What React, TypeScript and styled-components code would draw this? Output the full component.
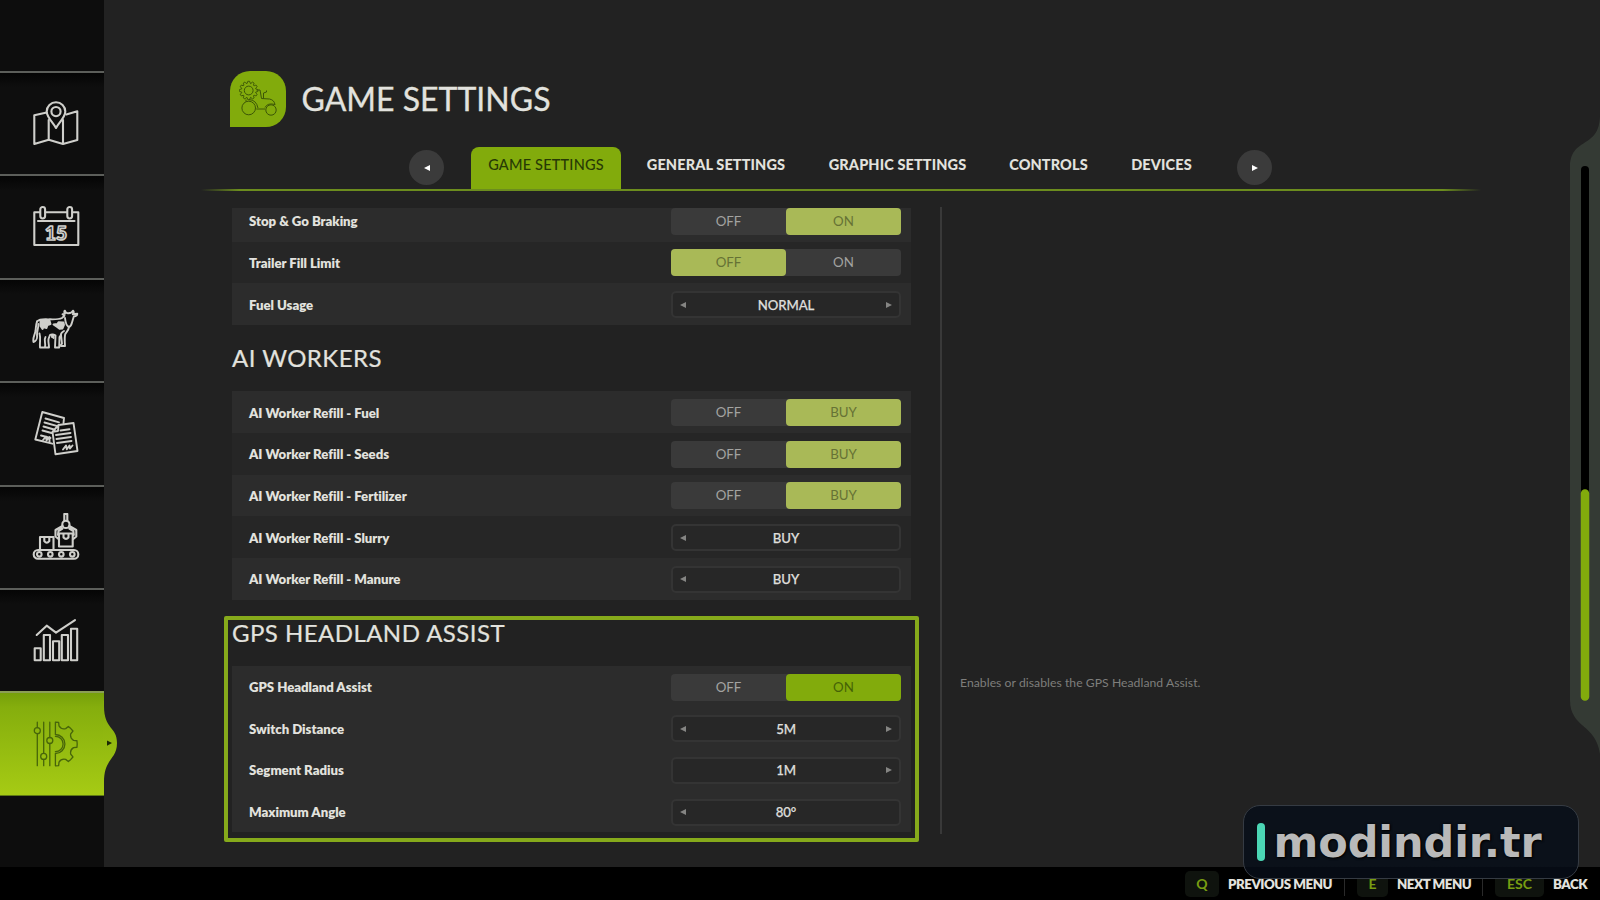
import React from "react";
import styled, { createGlobalStyle, css } from "styled-components";

const GREEN = "#82ab0c";
const BG = "#222222";
const TEXT = "#e2e2de";

const Global = createGlobalStyle`
  * { box-sizing: border-box; }
  body {
    margin: 0;
    background: ${BG};
    font-family: Lato, "Open Sans", sans-serif;
    font-variant-ligatures: none;
    overflow: hidden;
  }
`;

const Screen = styled.div`
  position: relative;
  width: 1600px;
  height: 900px;
  background: ${BG};
  color: ${TEXT};
  display: grid;
  grid-template: 867px 33px / 104px 1fr;
  overflow: hidden;
  white-space: nowrap;
`;

/* ---------- side bar ---------- */
const SideBar = styled.nav`
  background: #0d0d0d;
  padding-top: 71px;
  display: flex;
  flex-direction: column;
`;

const SideItem = styled.div<{ $active?: boolean }>`
  position: relative;
  height: 103.4px;
  flex: none;
  padding-left: 32px;
  display: flex;
  align-items: center;
  border-top: 2px solid #5c5e5a;
  background: linear-gradient(#050505, #0e0e0e 14%);
  color: #cfcfcb;
  ${(p) =>
    p.$active &&
    css`
      height: 105px;
      border-top-color: #8b9f55;
      background: linear-gradient(#76a00a, #85ae0d 14%, #a6cb14);
      color: #47650a;
      border-bottom: 1px solid #5f7a14;
    `}
`;

const Bulge = styled.svg`
  position: absolute;
  left: 103px;
  top: 5px;
  width: 15px;
  height: 90px;
`;

const Icon = styled.svg<{ $line?: number }>`
  width: 48px;
  height: 48px;
  fill: none;
  stroke: currentColor;
  stroke-width: ${(p) => p.$line ?? 2.1};
  stroke-linejoin: round;
  stroke-linecap: round;
`;

/* ---------- header ---------- */
const Main = styled.main`
  padding-top: 71px;
  display: flex;
  flex-direction: column;
`;

const Header = styled.header`
  display: flex;
  align-items: center;
  height: 56px;
  padding-left: 126px;
  gap: 15.5px;
`;

const Badge = styled.div`
  width: 56px;
  height: 56px;
  border-radius: 20px 20px 20px 0;
  background: ${GREEN};
  color: #3c5607;
`;

const Title = styled.h1`
  margin: 0;
  font-size: 32px;
  font-weight: 400;
  line-height: 56px;
  letter-spacing: 0;
  -webkit-text-stroke: 0.3px;
`;

const TabBar = styled.div`
  margin-top: 20px;
  height: 42px;
  padding-left: 305px;
  display: flex;
`;

const RoundButton = styled.div`
  margin-top: 3px;
  width: 35px;
  height: 35px;
  flex: none;
  border-radius: 50%;
  background: #3b3b3b;
  display: grid;
  place-items: center;
`;

const Tab = styled.div<{ $w: number; $active?: boolean }>`
  width: ${(p) => p.$w}px;
  flex: none;
  text-align: center;
  font-size: 14.5px;
  line-height: 36px;
  font-weight: 900;
  letter-spacing: 0.12px;
  ${(p) =>
    p.$active &&
    css`
      margin: 0 4px 0 27px;
      border-radius: 8px 8px 0 0;
      background: ${GREEN};
      color: #273a05;
      font-weight: 500;
      letter-spacing: 0.2px;
    `}
`;

const Rule = styled.div`
  margin: 0 119px 0 97px;
  height: 2px;
  background: linear-gradient(90deg, transparent, #6c8d1e 3%, #6c8d1e 97%, transparent);
`;

/* ---------- settings list ---------- */
const Content = styled.div`
  display: flex;
  padding: 17px 0 0 128px;
`;

const Viewport = styled.div`
  width: 679px;
  height: 626px;
  clip-path: inset(0 -12px -12px -12px);
`;

const Scrolled = styled.div`
  margin-top: -8px;
`;

const Group = styled.section`
  position: relative;
`;

const Heading = styled.h2`
  margin: 0;
  height: 66.3px;
  line-height: 66px;
  font-size: 24px;
  font-weight: 400;
  letter-spacing: 0.45px;
  -webkit-text-stroke: 0.2px;
`;

const Row = styled.div<{ $lit: boolean }>`
  height: 41.67px;
  padding: 1px 10px 0 17px;
  display: flex;
  align-items: center;
  justify-content: space-between;
  background: ${(p) => (p.$lit ? "#2c2c2c" : "#262626")};
`;

const Label = styled.span`
  font-size: 13.2px;
  font-weight: 800;
  letter-spacing: -0.03px;
`;

const Switch = styled.div`
  display: flex;
  width: 230px;
  height: 27px;
  border-radius: 4px;
  background: #3a3a3a;
`;

const Choice = styled.span<{ $tone?: "soft" | "strong" }>`
  flex: 1;
  border-radius: 4px;
  text-align: center;
  font-size: 13.3px;
  line-height: 27px;
  color: ${(p) => (p.$tone ? (p.$tone === "soft" ? "#667235" : "#456206") : "#a3a3a1")};
  background: ${(p) => (p.$tone === "soft" ? "#a9b957" : p.$tone === "strong" ? GREEN : "transparent")};
`;

const Picker = styled.div`
  width: 230px;
  height: 27px;
  padding: 0 5px;
  border: 2px solid #343434;
  border-radius: 5px;
  background: #272727;
  display: grid;
  grid-template-columns: 10px 1fr 10px;
  align-items: center;
  text-align: center;
  font-size: 13.2px;
  font-weight: 500;
  letter-spacing: -0.1px;
  color: #dededb;
  -webkit-text-stroke: 0.25px;
`;

const Highlight = styled.div`
  position: absolute;
  left: -8px;
  right: -8px;
  top: 16px;
  bottom: -10px;
  border: 4.5px solid #86aa1b;
  border-radius: 2px;
`;

const Detail = styled.aside`
  margin: -1px 0 0 29px;
  height: 627px;
  border-left: 2px solid #393939;
  padding: 467px 0 0 18px;
  font-size: 12.2px;
  line-height: 18px;
  letter-spacing: 0.04px;
  color: #7e7e7c;
`;

/* ---------- scroll bar ---------- */
const ScrollPanel = styled.svg`
  position: absolute;
  right: 0;
  top: 110px;
  width: 30px;
  height: 650px;
`;

/* ---------- footer ---------- */
const Footer = styled.footer`
  grid-column: 1 / 3;
  background: #000;
  display: flex;
  justify-content: flex-end;
  align-items: center;
  padding: 1px 12px 0 0;
`;

const Key = styled.kbd<{ $w: number }>`
  width: ${(p) => p.$w}px;
  height: 26px;
  border-radius: 5px;
  background: #0f130e;
  color: #789d12;
  font: 700 14px/26px Lato, sans-serif;
  text-align: center;
`;

const Hint = styled.span<{ $w: number }>`
  width: ${(p) => p.$w}px;
  margin-left: 9px;
  font-size: 13.3px;
  font-weight: 800;
  letter-spacing: -0.48px;
`;

const Separator = styled.i`
  width: 1px;
  height: 24px;
  margin: 0 12px;
  background: #2a2a2a;
`;

const Watermark = styled.div`
  position: absolute;
  left: 1242.5px;
  top: 805px;
  width: 336px;
  height: 73.5px;
  border-radius: 17px;
  border: 1px solid #353b43;
  background: linear-gradient(#0b111a 84%, #060b14 85%);
  display: flex;
  align-items: center;
  padding-left: 13px;
  gap: 9px;
  color: #b9b9b9;
  font: 700 43px/60px "DejaVu Sans", sans-serif;
  letter-spacing: -0.1px;
  text-shadow: 0 0 3px #000, 1px 1px 2px #000;

  &::before {
    content: "";
    width: 8px;
    height: 38px;
    border-radius: 4px;
    background: #4bd6b5;
  }
`;

const Arrow = ({ dir, size = 6, color = "#858583" }: { dir: "l" | "r"; size?: number; color?: string }) => (
  <svg width={size} height={size} viewBox="0 0 6 6" style={{ display: "block", justifySelf: "center" }}>
    <path d={dir === "l" ? "M6 0V6L0 3Z" : "M0 0V6L6 3Z"} fill={color} />
  </svg>
);

/* Outline of a cog between two angles, with a rounded-off trapezoid for each tooth. */
function cog(cx: number, cy: number, outer: number, inner: number, teeth: number, from = -90, to = 270) {
  const step = 360 / teeth;
  const pt = (r: number, a: number) =>
    `${(cx + r * Math.cos((a * Math.PI) / 180)).toFixed(2)} ${(cy + r * Math.sin((a * Math.PI) / 180)).toFixed(2)}`;
  let d = `M${pt(outer, from)}`;
  for (let a = from; a < to - 0.1; a += step) {
    d += `L${pt(outer, a + step * 0.19)}L${pt(inner + 1, a + step * 0.25)}`;
    d += `Q${pt(inner - 2, a + step * 0.5)} ${pt(inner + 1, a + step * 0.75)}`;
    d += `L${pt(outer, a + step * 0.81)}L${pt(outer, a + step)}`;
  }
  return d;
}

const MapIcon = () => (
  <Icon viewBox="0 0 48 48">
    <path d="M14.7 12.5 2.3 15.3V44l14.4-4.3L31 44l14.3-4V11.3l-11 3.2M16.7 20v19.7M31 20v24" />
    <path d="M24 28c-2-4.500-9.300-10.500-9.300-16.500a9.300 9.300 0 0 1 18.600 0C33.300 17.500 26 23.500 24 28Z" />
    <circle cx="24" cy="11.600" r="4.600" />
  </Icon>
);

const CalendarIcon = () => (
  <Icon viewBox="0 0 48 48">
    <path d="M8 9.300H2.300V42h44V9.300H41M13.500 9.300H35M6 18h36.500" />
    <rect x="8.300" y="4" width="4.800" height="11.500" rx="2.400" />
    <rect x="35.300" y="4" width="4.800" height="11.500" rx="2.400" />
    <text x="24" y="36.500" textAnchor="middle" fontFamily="Lato, sans-serif" fontWeight="900" fontSize="19" style={{ strokeWidth: 1.7 }}>
      15
    </text>
  </Icon>
);

const CowIcon = () => (
  <Icon viewBox="0 0 48 48" $line={1.9}>
    <path d="M5 15.500C8 12.500 12 13.500 18 13.300c6 .2 9 .2 12-1.300l2.500-2.300-2-1.500 2.500-.5c-1-1-1-2.500 0-3 .5 1.500 1.500 2.500 3 2.500s4 .2 5-2.500c1 1 .7 2.500-.2 3.500l4.500-.4c0 1.600-2 2.600-3.500 2.700l-1.800 6c-.5 2-1.500 4-3 4.500-.5 3.500-2 4.500-3.500 6.500-1 2-1 5-.5 12.500h-4V39l1-1.500-1-8.500-1.500 2-.3 10.500h-4.200l.5-12c-1-1-4-1.500-5.500-.5l-1.500 4c-.5 3 .5 5 .5 8.500H8c-.5-6 1-9-.5-14" />
    <path d="M5 15.500C4 18 4 21 3.500 25c-1 5-3 7-2 11 2-.5 4-3 3.500-6.500C5 25 6.500 21 6.500 18" />
    <path d="M33 12c.5 5 1.500 8 4 9M13.500 31c-2 3 .5 6-.5 10M20 31v-2l1.500 1v2M32 25c-2 1-3 2-3.200 4" />
    <path fill="currentColor" d="M8.500 14.500h9l1 3.500-3 1-1 3-3-1-1 2-2-3ZM21.500 18.500l4-.5 1-1.800 5 .3.500 2.500-1.500 3.500-3 .2-2-1.500Z" />
  </Icon>
);

const PapersIcon = () => (
  <Icon viewBox="0 0 48 48" $line={1.9}>
    <path d="M31.500 13 32 8 10.300 2 3.300 29.500l17 4.200" />
    <path d="m13.500 8.500 13.500 3.800M12.500 12.500l13 3.700M11.500 16.500l10.500 3M10.500 20.500l9 2.500M9 25.500l9.500 2.500M11 30l3-3.500.500 4 3-3.500v5" />
    <path d="m26.500 15 15-2 4 28-22 3.300-3-22.500ZM26.500 15l-.5 6-5.500.8" />
    <path d="m28.500 20.500 9-1.300M24 25l14.500-2M24.500 29l14.500-2M25 33l14.500-2M31 39.500l3-4 .8 3.700 2.700-3.700.5 3 2.500-3" />
  </Icon>
);

const ConveyorIcon = () => (
  <Icon viewBox="0 0 48 48">
    <rect x="1.700" y="37" width="44.600" height="8.700" rx="4.300" />
    {[7.3, 18.3, 29.3, 40.3].map((x) => (
      <circle key={x} cx={x} cy="41.300" r="2.300" />
    ))}
    <path d="M8 24h13.500v13H8ZM12.300 24v4.200q2.500 3 5 0V24M27 20.500h13.700v13H27ZM31.500 20.500v4q2.500 2.800 5 0v-4" />
    <path d="M32.300 8V1h3v7" />
    <circle cx="33.900" cy="11.400" r="3.600" />
    <path d="m30.500 13-7 4v6.500l3 2.500M30.500 15.500l-4 2.500-.5 4M37.300 13l7 4v6.500l-3 2.500M37.300 15.500l4 2.500.5 4" />
  </Icon>
);

const ChartIcon = () => (
  <Icon viewBox="0 0 48 48">
    <path d="M2.700 31.300h6v12h-6ZM11.800 18h6.200v25.300h-6.200ZM21 24.300h6.200v19H21ZM29.800 18H36v25.300h-6.200ZM39 11.700h6.200v31.600H39ZM4.700 18l10-9.300 9.300 7 19-12.500" />
  </Icon>
);

const SettingsIcon = () => (
  <Icon viewBox="0 0 48 48" $line={1.3}>
    <path d="M5.300 2.200v5.500M5.300 13.700v32M11.700 2.200v31.200M11.700 39.400v6.300M17.800 2.200v15.300M17.800 23.500v22.200" />
    <circle cx="5.300" cy="10.700" r="3" />
    <circle cx="11.700" cy="36.400" r="3" />
    <circle cx="17.800" cy="20.500" r="3" />
    <path d={cog(23.4, 24, 21.8, 17.5, 8, -90, 90) + "V33.500A9.500 9.500 0 0 0 23.400 14.500V2.200"} />
    <path d="M23.400 16.300a7.700 7.700 0 0 1 0 15.400" />
  </Icon>
);

const TractorIcon = () => (
  <svg width="56" height="56" viewBox="0 0 56 56" fill="none" stroke="currentColor" strokeWidth="1" strokeLinejoin="round">
    <path d={cog(18.7, 19.5, 9.2, 7.6, 12)} />
    <circle cx="18.700" cy="19.500" r="4.400" />
    <circle cx="18.700" cy="37" r="6.800" />
    <circle cx="41" cy="39" r="5.200" />
    <path d="M16 28.500v2M26.500 19h3.500l1.500 8.500 8 .5q5 1 5.500 6M33.500 27.500V22l3-1v-1.500M26.300 38H35M18.700 28.600q7.500 0 9.300 8.400M35 36.500q2.500-5 10-3" />
  </svg>
);

type Setting =
  | { label: string; options: [string, string]; on: 0 | 1; strong?: boolean }
  | { label: string; value: string; arrows: string };

const settings: { title?: string; highlighted?: boolean; rows: Setting[] }[] = [
  {
    rows: [
      { label: "Stop & Go Braking", options: ["OFF", "ON"], on: 1 },
      { label: "Trailer Fill Limit", options: ["OFF", "ON"], on: 0 },
      { label: "Fuel Usage", value: "NORMAL", arrows: "lr" },
    ],
  },
  {
    title: "AI WORKERS",
    rows: [
      { label: "AI Worker Refill - Fuel", options: ["OFF", "BUY"], on: 1 },
      { label: "AI Worker Refill - Seeds", options: ["OFF", "BUY"], on: 1 },
      { label: "AI Worker Refill - Fertilizer", options: ["OFF", "BUY"], on: 1 },
      { label: "AI Worker Refill - Slurry", value: "BUY", arrows: "l" },
      { label: "AI Worker Refill - Manure", value: "BUY", arrows: "l" },
    ],
  },
  {
    title: "GPS HEADLAND ASSIST",
    highlighted: true,
    rows: [
      { label: "GPS Headland Assist", options: ["OFF", "ON"], on: 1, strong: true },
      { label: "Switch Distance", value: "5M", arrows: "lr" },
      { label: "Segment Radius", value: "1M", arrows: "r" },
      { label: "Maximum Angle", value: "80°", arrows: "l" },
    ],
  },
];

const SettingRow = ({ s, lit }: { s: Setting; lit: boolean }) => (
  <Row $lit={lit}>
    <Label>{s.label}</Label>
    {"options" in s ? (
      <Switch>
        {s.options.map((o, i) => (
          <Choice key={o} $tone={i === s.on ? (s.strong ? "strong" : "soft") : undefined}>
            {o}
          </Choice>
        ))}
      </Switch>
    ) : (
      <Picker>
        {s.arrows.includes("l") ? <Arrow dir="l" /> : <span />}
        <span>{s.value}</span>
        {s.arrows.includes("r") ? <Arrow dir="r" /> : <span />}
      </Picker>
    )}
  </Row>
);

const NextButton = styled(RoundButton)`
  margin-left: 23px;
`;

export default function App() {
  return (
    <Screen>
      <Global />
      <SideBar>
        {[MapIcon, CalendarIcon, CowIcon, PapersIcon, ConveyorIcon, ChartIcon].map((Glyph, i) => (
          <SideItem key={i}>
            <Glyph />
          </SideItem>
        ))}
        <SideItem $active>
          <SettingsIcon />
          <Bulge viewBox="0 0 15 90">
            <defs>
              <linearGradient id="bulge" x1="0" y1="0" x2="0" y2="1">
                <stop offset="0" stopColor="#84ad0d" />
                <stop offset="1" stopColor="#a2c713" />
              </linearGradient>
            </defs>
            <path d="M0 3H1V8C1 32 14 28 14 45S1 60 1 84V87H0Z" fill="url(#bulge)" />
            <path d="M4 42.500v5.200l5-2.600Z" fill="#1c2a04" />
          </Bulge>
        </SideItem>
      </SideBar>

      <Main>
        <Header>
          <Badge>
            <TractorIcon />
          </Badge>
          <Title>GAME SETTINGS</Title>
        </Header>
        <TabBar>
          <RoundButton>
            <Arrow dir="l" color="#fff" />
          </RoundButton>
          <Tab $w={150} $active>GAME SETTINGS</Tab>
          <Tab $w={182}>GENERAL SETTINGS</Tab>
          <Tab $w={181}>GRAPHIC SETTINGS</Tab>
          <Tab $w={121}>CONTROLS</Tab>
          <Tab $w={105}>DEVICES</Tab>
          <NextButton>
            <Arrow dir="r" color="#fff" />
          </NextButton>
        </TabBar>
        <Rule />
        <Content>
          <Viewport>
            <Scrolled>
              {settings.map((g, i) => (
                <Group key={i}>
                  {g.title && <Heading>{g.title}</Heading>}
                  {g.rows.map((s, j) => (
                    <SettingRow key={s.label} s={s} lit={g.highlighted || j % 2 === 0} />
                  ))}
                  {g.highlighted && <Highlight />}
                </Group>
              ))}
            </Scrolled>
          </Viewport>
          <Detail>Enables or disables the GPS Headland Assist.</Detail>
        </Content>
      </Main>

      <Footer>
        <Key $w={34}>Q</Key>
        <Hint $w={104}>PREVIOUS MENU</Hint>
        <Separator />
        <Key $w={31}>E</Key>
        <Hint $w={73}>NEXT MENU</Hint>
        <Separator />
        <Key $w={49}>ESC</Key>
        <Hint $w={35}>BACK</Hint>
      </Footer>

      <ScrollPanel viewBox="0 0 30 650">
        <path d="M30 6C29 40 0 26 0 58V590C0 618 26 614 30 644Z" fill="#343a34" />
        <path d="M15 60V580" stroke="#000" strokeWidth="8" strokeLinecap="round" />
        <path d="M15 383.500V586.500" stroke={GREEN} strokeWidth="8.500" strokeLinecap="round" />
      </ScrollPanel>

      <Watermark>modindir.tr</Watermark>
    </Screen>
  );
}
